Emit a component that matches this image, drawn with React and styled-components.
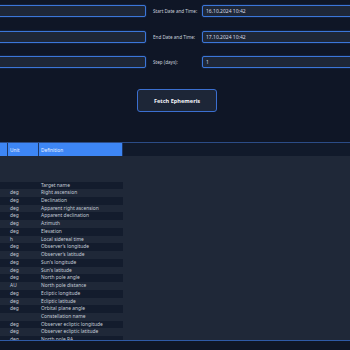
import React from 'react';
import styled, { createGlobalStyle } from 'styled-components';

const GlobalStyle = createGlobalStyle`
  html, body {
    margin: 0;
    padding: 0;
    background: #0f1626;
    overflow: hidden;
  }
  body {
    font-family: "Noto Sans", "DejaVu Sans", sans-serif;
    color: #d6dce6;
  }
`;

const Page = styled.div`
  width: 474px;
  margin-left: -60px;
`;

const Form = styled.div`
  display: grid;
  grid-template-columns: 56px 150px 56px 212px;
  row-gap: 13.5px;
  padding-top: 5px;
  align-items: center;
`;

const Label = styled.label`
  font-size: 4.6px;
  color: #c9d0dc;
  padding-left: 7px;
  white-space: nowrap;
`;

const Input = styled.input`
  box-sizing: border-box;
  width: 100%;
  height: 12px;
  margin: 0;
  padding: 0 3px;
  background: #1e2738;
  border: 1px solid #3b76d9;
  border-radius: 2px;
  box-shadow: 0 0 1.5px rgba(59, 118, 217, 0.6);
  color: #d6dce6;
  font-family: inherit;
  font-size: 5px;
  outline: none;
`;

const ButtonRow = styled.div`
  display: flex;
  justify-content: center;
  padding-top: 21px;
`;

const FetchButton = styled.button`
  box-sizing: border-box;
  width: 80px;
  height: 23px;
  background: #1d2637;
  border: 1px solid #3b6fd0;
  border-radius: 3px;
  color: #f1f4f8;
  font-family: inherit;
  font-weight: bold;
  font-size: 5.6px;
  cursor: pointer;
`;

const TableBox = styled.div`
  margin-top: 30px;
  border-top: 1px solid #2b4c87;
  border-bottom: 1px solid #2f5aa6;
  height: 197px;
  overflow: hidden;
  background: #1f2838;
`;

const HeadRow = styled.div`
  display: flex;
  height: 13px;
  background: #111a2b;
`;

const HeadCell = styled.div`
  box-sizing: border-box;
  width: ${({ $w }) => $w}px;
  background: #3d86f5;
  border-right: 1px solid #1d3766;
  color: #eaf1ff;
  font-size: 4.8px;
  padding-left: 2px;
  display: flex;
  align-items: center;
`;

const Body = styled.div`
  padding-top: 25.5px;
`;

const Row = styled.div`
  display: flex;
  width: 183px;
  height: 7.74px;
  background: ${({ $dark }) => ($dark ? '#131c2d' : 'transparent')};
`;

const Cell = styled.div`
  box-sizing: border-box;
  width: ${({ $w }) => $w}px;
  padding-left: 2px;
  font-size: 4.9px;
  line-height: 7.74px;
  color: #c6cdd8;
  white-space: nowrap;
  overflow: hidden;
`;

const rows = [
  ['', 'Target name'],
  ['deg', 'Right ascension'],
  ['deg', 'Declination'],
  ['deg', 'Apparent right ascension'],
  ['deg', 'Apparent declination'],
  ['deg', 'Azimuth'],
  ['deg', 'Elevation'],
  ['h', 'Local sidereal time'],
  ['deg', "Observer's longitude"],
  ['deg', "Observer's latitude"],
  ['deg', "Sun's longitude"],
  ['deg', "Sun's latitude"],
  ['deg', 'North pole angle'],
  ['AU', 'North pole distance'],
  ['deg', 'Ecliptic longitude'],
  ['deg', 'Ecliptic latitude'],
  ['deg', 'Orbital plane angle'],
  ['', 'Constellation name'],
  ['deg', 'Observer ecliptic longitude'],
  ['deg', 'Observer ecliptic latitude'],
  ['deg', 'North pole RA'],
  ['deg', 'North pole DEC'],
];

const App = () => {
  return (
    <>
      <GlobalStyle />
      <Page>
        <Form>
          <Label />
          <Input defaultValue="" />
          <Label>Start Date and Time:</Label>
          <Input defaultValue="16.10.2024 10:42" />

          <Label />
          <Input defaultValue="" />
          <Label>End Date and Time:</Label>
          <Input defaultValue="17.10.2024 10:42" />

          <Label />
          <Input defaultValue="" />
          <Label>Step (days):</Label>
          <Input defaultValue="1" />
        </Form>

        <ButtonRow>
          <FetchButton>Fetch Ephemeris</FetchButton>
        </ButtonRow>

        <TableBox>
          <HeadRow>
            <HeadCell $w={68} />
            <HeadCell $w={31}>Unit</HeadCell>
            <HeadCell $w={84}>Definition</HeadCell>
          </HeadRow>
          <Body>
            {rows.map(([unit, def], i) => (
              <Row key={def} $dark={i % 2 === 0}>
                <Cell $w={68} />
                <Cell $w={31}>{unit}</Cell>
                <Cell $w={84}>{def}</Cell>
              </Row>
            ))}
          </Body>
        </TableBox>
      </Page>
    </>
  );
};

export default App;
